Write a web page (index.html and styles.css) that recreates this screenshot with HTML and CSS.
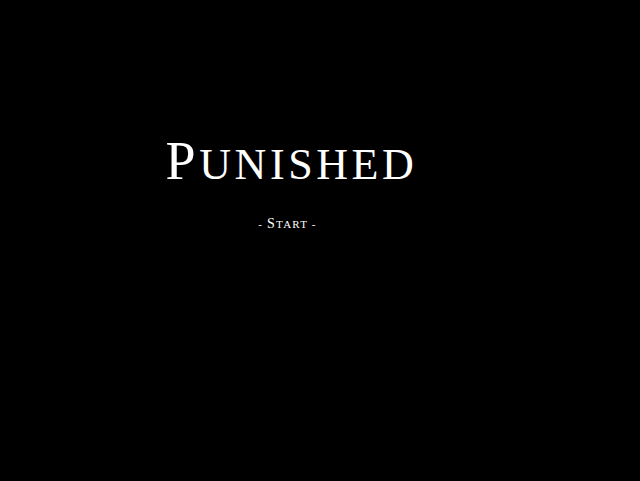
FILE: index.html
```html
<!DOCTYPE html>
<html lang="en">
<head>
    <meta charset="UTF-8">
    <meta name="viewport" content="width=device-width, initial-scale=1.0">
    <title>Punished</title>
    <link rel="stylesheet" href="styles.css">
</head>
<body>
    <div class="title-screen">
        <h1 class="game-title"><span class="initial">P</span><span class="rest">unished</span></h1>
        <a class="menu-item" href="#">- <span class="initial">S</span><span class="rest">tart</span> -</a>
    </div>
</body>
</html>
```
FILE: styles.css
```css
body {
    margin: 0;
    padding: 0;
    background-color: #000;
    color: #fff;
    font-family: "Liberation Serif", "Times New Roman", serif;
    height: 481px;
    overflow: hidden;
}

/* title block sits a bit left of the middle */
.title-screen {
    width: 580px;
    padding-top: 134px;
    display: flex;
    flex-direction: column;
    align-items: center;
}

.game-title {
    margin: 0;
    font-weight: normal;
    font-size: 54px;
    line-height: 54px;
    letter-spacing: 3.6px;
    padding-left: 3px;
}

.game-title .rest {
    font-size: 44px;
    text-transform: uppercase;
}

.menu-item {
    margin-top: 25px;
    margin-right: 5px;
    color: #fff;
    text-decoration: none;
    font-size: 11px;
    line-height: 14px;
    letter-spacing: 1.2px;
}

.menu-item .initial {
    font-size: 14px;
}

.menu-item .rest {
    text-transform: uppercase;
}
```
